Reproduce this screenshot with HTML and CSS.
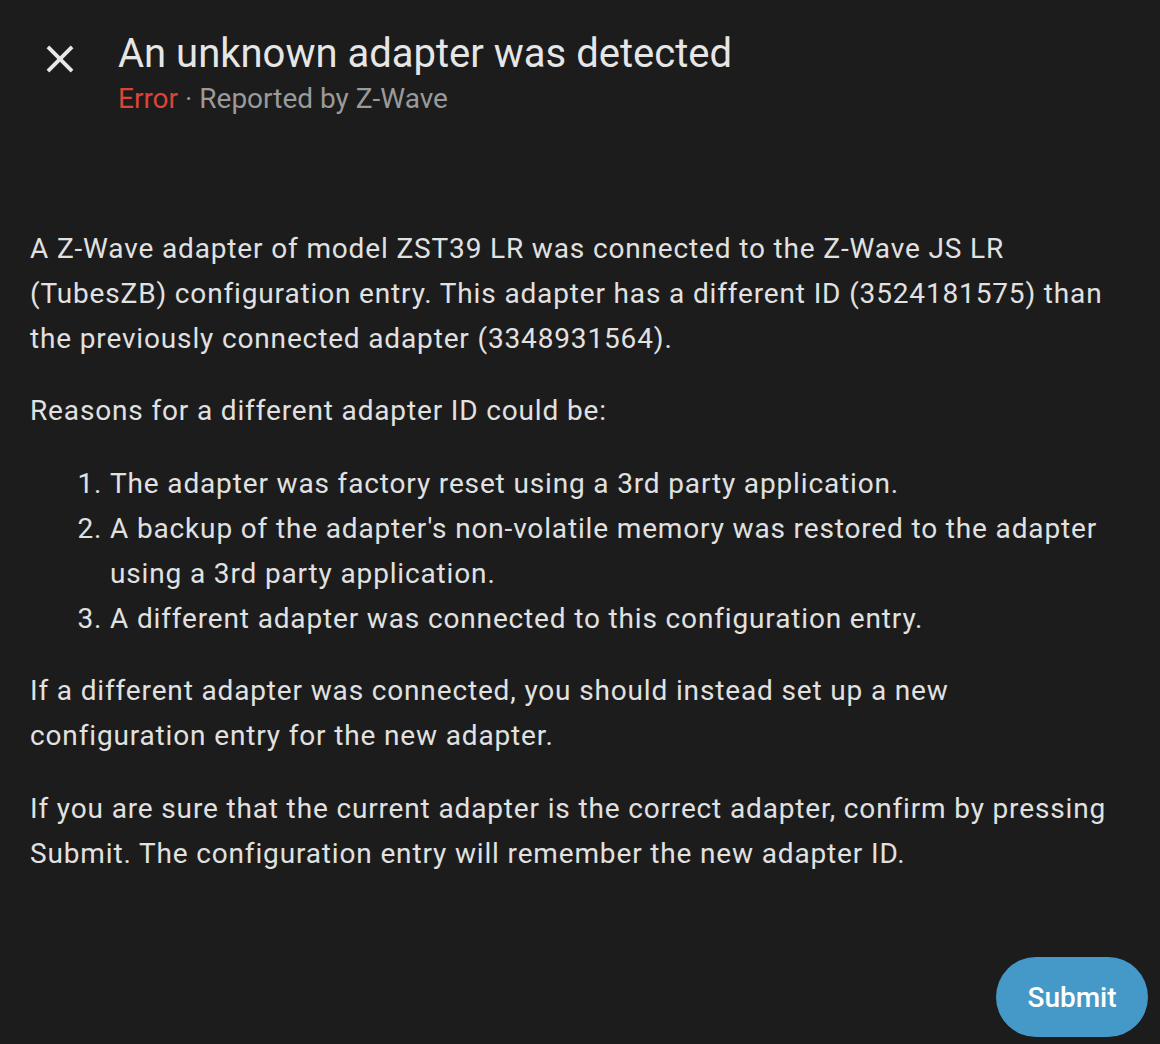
FILE: index.html
```html
<!DOCTYPE html>
<html lang="en">
<head>
<meta charset="utf-8">
<title>An unknown adapter was detected</title>
<link rel="stylesheet" href="styles.css">
</head>
<body>
<div class="dialog">
  <header class="header">
    <button class="close" aria-label="Close">
      <svg viewBox="0 0 24 24" width="46" height="46"><path fill="currentColor" d="M19,6.41L17.59,5L12,10.59L6.41,5L5,6.41L10.59,12L5,17.59L6.41,19L12,13.41L17.59,19L19,17.59L13.41,12L19,6.41Z"/></svg>
    </button>
    <div class="titles">
      <h1 class="title">An unknown adapter was detected</h1>
      <div class="subtitle"><span class="error">Error</span> · Reported by Z-Wave</div>
    </div>
  </header>
  <main class="content">
    <p>A Z-Wave adapter of model ZST39 LR was connected to the Z-Wave JS LR (TubesZB) configuration entry. This adapter has a different ID (3524181575) than the previously connected adapter (3348931564).</p>
    <p>Reasons for a different adapter ID could be:</p>
    <ol>
      <li>The adapter was factory reset using a 3rd party application.</li>
      <li>A backup of the adapter's non-volatile memory was restored to the adapter using a 3rd party application.</li>
      <li>A different adapter was connected to this configuration entry.</li>
    </ol>
    <p>If a different adapter was connected, you should instead set up a new configuration entry for the new adapter.</p>
    <p>If you are sure that the current adapter is the correct adapter, confirm by pressing Submit. The configuration entry will remember the new adapter ID.</p>
  </main>
  <footer class="actions">
    <button class="submit">Submit</button>
  </footer>
</div>
</body>
</html>
```
FILE: styles.css
```css
html, body {
  margin: 0;
  padding: 0;
  background: #1c1c1c;
}
body {
  font-family: Roboto, "Noto Sans", sans-serif;
  color: #e1e1e1;
  width: 1160px;
  height: 1044px;
  overflow: hidden;
}
.dialog {
  display: flex;
  flex-direction: column;
  height: 1044px;
}
.header {
  display: flex;
  align-items: flex-start;
  padding: 30px 30px 0 37px;
}
.close {
  background: none;
  border: 0;
  padding: 0;
  margin: 6px 35px 0 0;
  width: 46px;
  height: 46px;
  color: #e8e8e8;
  display: flex;
}
.titles {
  display: flex;
  flex-direction: column;
  gap: 2px;
}
.title {
  margin: 0;
  font-size: 40px;
  line-height: 48px;
  font-weight: 400;
  color: #e6e6e6;
}
.subtitle {
  font-size: 28px;
  line-height: 38px;
  color: #9a9a9a;
}
.error {
  color: #db4437;
}
.content {
  padding: 0 45px 0 30px;
  margin-top: 109px;
  font-size: 28px;
  line-height: 44.8px;
  letter-spacing: 0.85px;
  flex: 1;
}
.content p {
  margin: 0 0 28px;
}
.content ol {
  margin: 0 0 28px;
  padding-left: 80px;
}
.actions {
  display: flex;
  justify-content: flex-end;
  padding: 0 12px 7px;
}
.submit {
  width: 152px;
  height: 80px;
  border: 0;
  border-radius: 40px;
  background: #4499c8;
  color: #ffffff;
  font-family: Roboto, sans-serif;
  font-size: 28px;
  font-weight: 500;
}
```
